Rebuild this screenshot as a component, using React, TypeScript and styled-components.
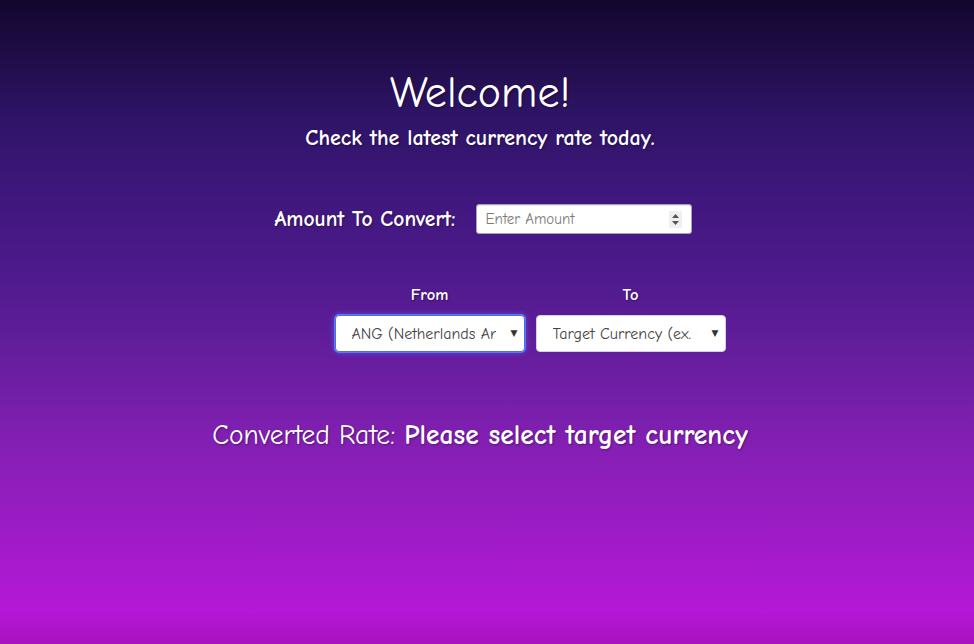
import React from "react";
import styled, { createGlobalStyle } from "styled-components";

const GlobalStyle = createGlobalStyle`
  html, body {
    margin: 0;
    padding: 0;
    height: 100%;
  }
  body {
    font-family: "Comic Sans MS", "Comic Neue", "Open Sans", sans-serif;
    background: #12072e;
  }
  #root { min-height: 100%; }
`;

const Page = styled.div`
  min-height: 644px;
  box-sizing: border-box;
  padding: 66px 14px 0 0;
  display: flex;
  flex-direction: column;
  align-items: center;
  color: #ffffff;
  background: linear-gradient(
    to bottom,
    #12072e 0%,
    #1f0c45 8%,
    #2e1466 18%,
    #3e177c 30%,
    #4d1a8c 42%,
    #5f1d99 52%,
    #741fa8 62%,
    #8a1fb8 72%,
    #a01bc8 84%,
    #b518d6 95%,
    #a812c0 100%
  );
`;

const Title = styled.h1`
  margin: 0;
  font-size: 44px;
  font-weight: 400;
  line-height: 54px;
  text-shadow: 1px 1px 2px rgba(0, 0, 0, 0.35);
`;

const Subtitle = styled.p`
  margin: 2px 0 0;
  font-size: 22px;
  font-weight: 700;
  line-height: 32px;
  text-shadow: 1px 1px 2px rgba(0, 0, 0, 0.35);
`;

const AmountRow = styled.div`
  margin-top: 50px;
  display: flex;
  align-items: center;
  gap: 20px;
  padding-left: 6px;
`;

const Label = styled.label`
  font-size: 21.5px;
  font-weight: 700;
  text-shadow: 1px 1px 2px rgba(0, 0, 0, 0.35);
`;

const InputBox = styled.div`
  width: 216px;
  height: 30px;
  box-sizing: border-box;
  background: #ffffff;
  border: 1px solid #a8a0b8;
  border-radius: 3px;
  display: flex;
  align-items: center;
  padding: 0 9px 0 9px;
  box-shadow: inset 0 1px 1px rgba(0, 0, 0, 0.1);
`;

const AmountInput = styled.input`
  flex: 1;
  min-width: 0;
  border: none;
  outline: none;
  background: transparent;
  font-family: inherit;
  font-size: 15px;
  color: #333;
  padding: 0;
  &::placeholder {
    color: #7a7a7a;
  }
`;

const Spinner = styled.div`
  width: 13px;
  height: 17px;
  background: #efefef;
  display: flex;
  align-items: center;
  justify-content: center;
`;

const SelectGrid = styled.div`
  margin-top: 50px;
  display: grid;
  grid-template-columns: 190px 190px;
  column-gap: 11px;
  row-gap: 9px;
  margin-left: 100px;
`;

const ColumnLabel = styled.div`
  text-align: center;
  font-size: 16.5px;
  font-weight: 700;
  line-height: 22px;
  text-shadow: 1px 1px 2px rgba(0, 0, 0, 0.35);
`;

const SelectBox = styled.div<{ $focused?: boolean }>`
  position: relative;
  height: 37px;
  box-sizing: border-box;
  background: #ffffff;
  border-radius: 4px;
  border: 1px solid ${(p) => (p.$focused ? "#4a6cf0" : "#d8d0e0")};
  box-shadow: ${(p) =>
    p.$focused ? "0 0 0 1px #5a78f0, 0 0 6px rgba(90, 120, 255, 0.7)" : "none"};
  display: flex;
  align-items: center;
  overflow: hidden;
`;

const SelectText = styled.span`
  flex: 1;
  margin-left: 16px;
  margin-right: 28px;
  white-space: nowrap;
  overflow: hidden;
  font-size: 16px;
  color: #444444;
`;

const Arrow = styled.span`
  position: absolute;
  right: 6px;
  top: 50%;
  transform: translateY(-58%);
  font-size: 9px;
  color: #333;
  font-family: "DejaVu Sans", sans-serif;
`;

const Result = styled.div`
  margin-top: 65px;
  font-size: 27.5px;
  line-height: 36px;
  text-shadow: 1px 1px 2px rgba(0, 0, 0, 0.35);
`;

const ResultValue = styled.strong`
  font-weight: 700;
`;

export default function App() {
  return (
    <>
      <GlobalStyle />
      <Page>
        <Title>Welcome!</Title>
        <Subtitle>Check the latest currency rate today.</Subtitle>
        <AmountRow>
          <Label htmlFor="amount">Amount To Convert:</Label>
          <InputBox>
            <AmountInput id="amount" type="text" placeholder="Enter Amount" />
            <Spinner>
              <svg width="9" height="13" viewBox="0 0 9 13">
                <path d="M4.5 1 L8 5 H1 Z" fill="#555" />
                <path d="M4.5 12 L8 8 H1 Z" fill="#555" />
              </svg>
            </Spinner>
          </InputBox>
        </AmountRow>
        <SelectGrid>
          <ColumnLabel>From</ColumnLabel>
          <ColumnLabel>To</ColumnLabel>
          <SelectBox $focused>
            <SelectText>ANG (Netherlands Antillean Guilder)</SelectText>
            <Arrow>▼</Arrow>
          </SelectBox>
          <SelectBox>
            <SelectText>Target Currency (ex. USD)</SelectText>
            <Arrow>▼</Arrow>
          </SelectBox>
        </SelectGrid>
        <Result>
          Converted Rate: <ResultValue>Please select target currency</ResultValue>
        </Result>
      </Page>
    </>
  );
}
